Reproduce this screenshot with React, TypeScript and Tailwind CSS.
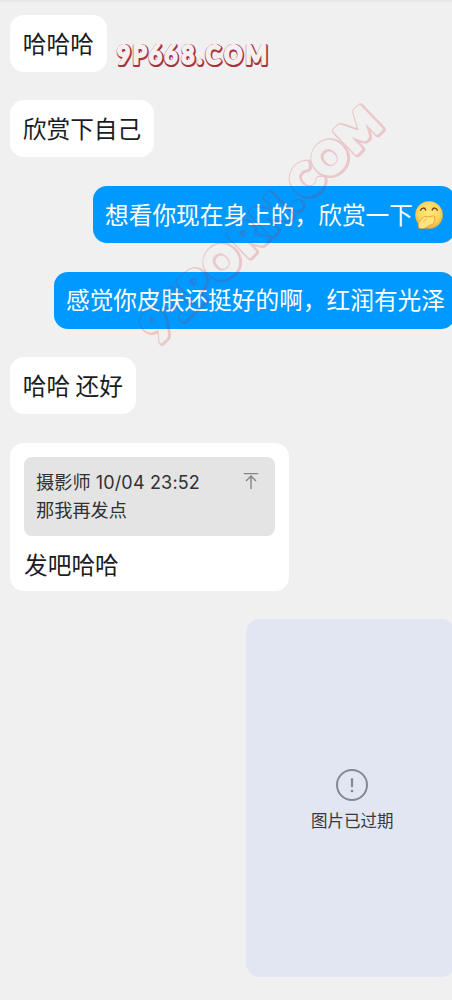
import React from 'react';

// Types for the conversation
interface Message {
  id: number;
  side: 'left' | 'right';
  text: string;
  emoji?: boolean;
}

const messages: Message[] = [
  { id: 1, side: 'left', text: '哈哈哈' },
  { id: 2, side: 'left', text: '欣赏下自己' },
  { id: 3, side: 'right', text: '想看你现在身上的，欣赏一下', emoji: true },
  { id: 4, side: 'right', text: '感觉你皮肤还挺好的啊，红润有光泽' },
  { id: 5, side: 'left', text: '哈哈 还好' },
];

// Giggling face with a hand over the mouth
const GiggleEmoji: React.FC = () => (
  <svg viewBox="0 0 28 28" className="mr-[2px] ml-[2px] h-7 w-7 shrink-0">
    <defs>
      <radialGradient id="face" cx="50%" cy="42%" r="55%">
        <stop offset="0" stopColor="#ffe978" />
        <stop offset="0.7" stopColor="#fed75e" />
        <stop offset="1" stopColor="#f3b045" />
      </radialGradient>
    </defs>
    <circle cx="14" cy="14" r="13.8" fill="url(#face)" />
    <g fill="none" stroke="#75401b" strokeLinecap="round">
      <path d="M5.6 9.2C6.6 6.4 9.6 6.4 10.7 9" strokeWidth="1.4" />
      <path d="M17.2 9C18.2 6.4 21.2 6.4 22.4 9.2" strokeWidth="1.4" />
    </g>
    <path
      d="M4 27.2C2.8 24.4 3 21 5.4 19.6L8.6 16C10 14.8 12 16.2 14 15.8L18.4 15C20 14.9 20.2 16.4 18.8 17C20.6 17 20.7 18.7 19.2 19.2C20.3 19.6 19.8 21.3 18.5 21.5C19 22.8 17.4 23.8 15.8 24C12 25 11.5 27.8 7.5 27.8Z"
      fill="#ffe57c"
      stroke="#e8952d"
      strokeWidth="0.8"
    />
    <path d="M8.4 20.5L12 17.5" stroke="#e8952d" strokeWidth="0.7" />
  </svg>
);

// Single chat bubble
const Bubble: React.FC<{ message: Message }> = ({ message }) => {
  if (message.side === 'right') {
    // Outgoing bubbles run slightly past the right edge
    return (
      <div className="-mr-[3px] flex justify-end">
        <div className="flex h-[57px] shrink-0 items-center rounded-[14px] bg-[#0099ff] pr-[10px] pl-3 text-white">
          <span className="whitespace-nowrap">{message.text}</span>
          {message.emoji && <GiggleEmoji />}
        </div>
      </div>
    );
  }

  return (
    <div className="flex">
      <div className="flex h-[57px] items-center rounded-[14px] bg-white px-[12.8px]">
        {message.text}
      </div>
    </div>
  );
};

// Site stamps that lie over the chat, hollow letters with a heavier lower right edge
const Stamps: React.FC = () => (
  <svg
    viewBox="0 0 452 400"
    className="pointer-events-none absolute -top-[2px] left-0 h-[400px] w-[452px] font-['Lato',sans-serif] font-black"
  >
    <defs>
      <mask id="hollow" maskUnits="userSpaceOnUse" x="-60" y="-60" width="420" height="120">
        <rect x="-60" y="-60" width="420" height="120" fill="#fff" />
        <text x="0 30 55 90 125 159 184 207 240 280" y="14.4" fontSize="43" textAnchor="middle" stroke="#000" strokeWidth="3.4" strokeLinejoin="round" aria-hidden="true">
          91PORN.COM
        </text>
      </mask>
    </defs>
    <g transform="translate(190.6 0) scale(0.88 1)" fontSize="26" textAnchor="middle" strokeLinejoin="round">
      <text x="-75.3 -57.3 -39.3 -21.8 -2.3 11.2 26.2 49.2 75.2" y="65" fill="#a8323d" stroke="#a8323d" strokeWidth="4.2">
        9P668.COM
      </text>
      <text x="-76 -58 -40 -22.5 -3 10.5 25.5 48.5 74.5" y="64.4" fill="#f4f0f0" stroke="#f4f0f0" strokeWidth="1.8" aria-hidden="true">
        9P668.COM
      </text>
    </g>
    <g transform="translate(157.3 325.2) rotate(-44)" opacity="0.19">
      <g mask="url(#hollow)">
        <text x="0.4 30.4 55.4 90.4 125.4 159.4 184.4 207.4 240.4 280.4" y="15.4" fontSize="43" textAnchor="middle" fill="#d21f2c" stroke="#d21f2c" strokeWidth="7.4" strokeLinejoin="round">
          91PORN.COM
        </text>
      </g>
    </g>
  </svg>
);

const App: React.FC = () => {
  return (
    <div className="relative h-[1000px] w-[452px] overflow-hidden border-t-2 border-[#e7e7e7] bg-[#f0f0f0] font-['Noto_Sans_CJK_SC',sans-serif] text-[23.7px] leading-none text-[#1b1c1e]">
      <div className="flex flex-col gap-[28.6px] pt-[12.9px] pl-[10px]">
        {messages.map((message) => (
          <Bubble key={message.id} message={message} />
        ))}

        {/* Reply with quote */}
        <div className="h-[148.5px] w-[279px] rounded-[14px] bg-white px-[14px] pt-[14px]">
          <div className="flex h-[79px] justify-between rounded-lg bg-[#e4e4e4] pt-[11.5px] pr-4 pl-3 text-[18.2px] leading-[27px] text-[#303133]">
            <div>
              <div className="whitespace-nowrap">
                摄影师 <span className="ml-[1px] font-['Inter',sans-serif] text-[18px] tracking-[0.01em]">10/04 23:52</span>
              </div>
              <div>那我再发点</div>
            </div>
            <svg viewBox="0 0 16 18" className="mt-1 h-[18px] w-4" fill="none" stroke="#858585" strokeWidth="1.4">
              <path d="M0.8 1.6H15.2M8 17V4.5M3 9L8 4L13 9" />
            </svg>
          </div>
          <div className="pt-[17px]">发吧哈哈</div>
        </div>

        {/* Expired picture */}
        <div className="-mt-[0.6px] -mr-[3px] flex justify-end">
          <div className="flex h-[358px] w-[209.5px] flex-col items-center rounded-[14px] bg-[#e2e6f2] pt-[150px] pl-[4px]">
            <svg viewBox="0 0 32 32" className="h-8 w-8" fill="none" stroke="#858792">
              <circle cx="16" cy="16" r="15" strokeWidth="2" />
              <path d="M16 10.2V17.3" strokeWidth="2.2" strokeLinecap="round" />
              <circle cx="16" cy="22" r="1.3" fill="#858792" stroke="none" />
            </svg>
            <div className="mt-[11px] text-[16.5px] text-[#36373f]">图片已过期</div>
          </div>
        </div>
      </div>
      <Stamps />
    </div>
  );
};

export default App;
